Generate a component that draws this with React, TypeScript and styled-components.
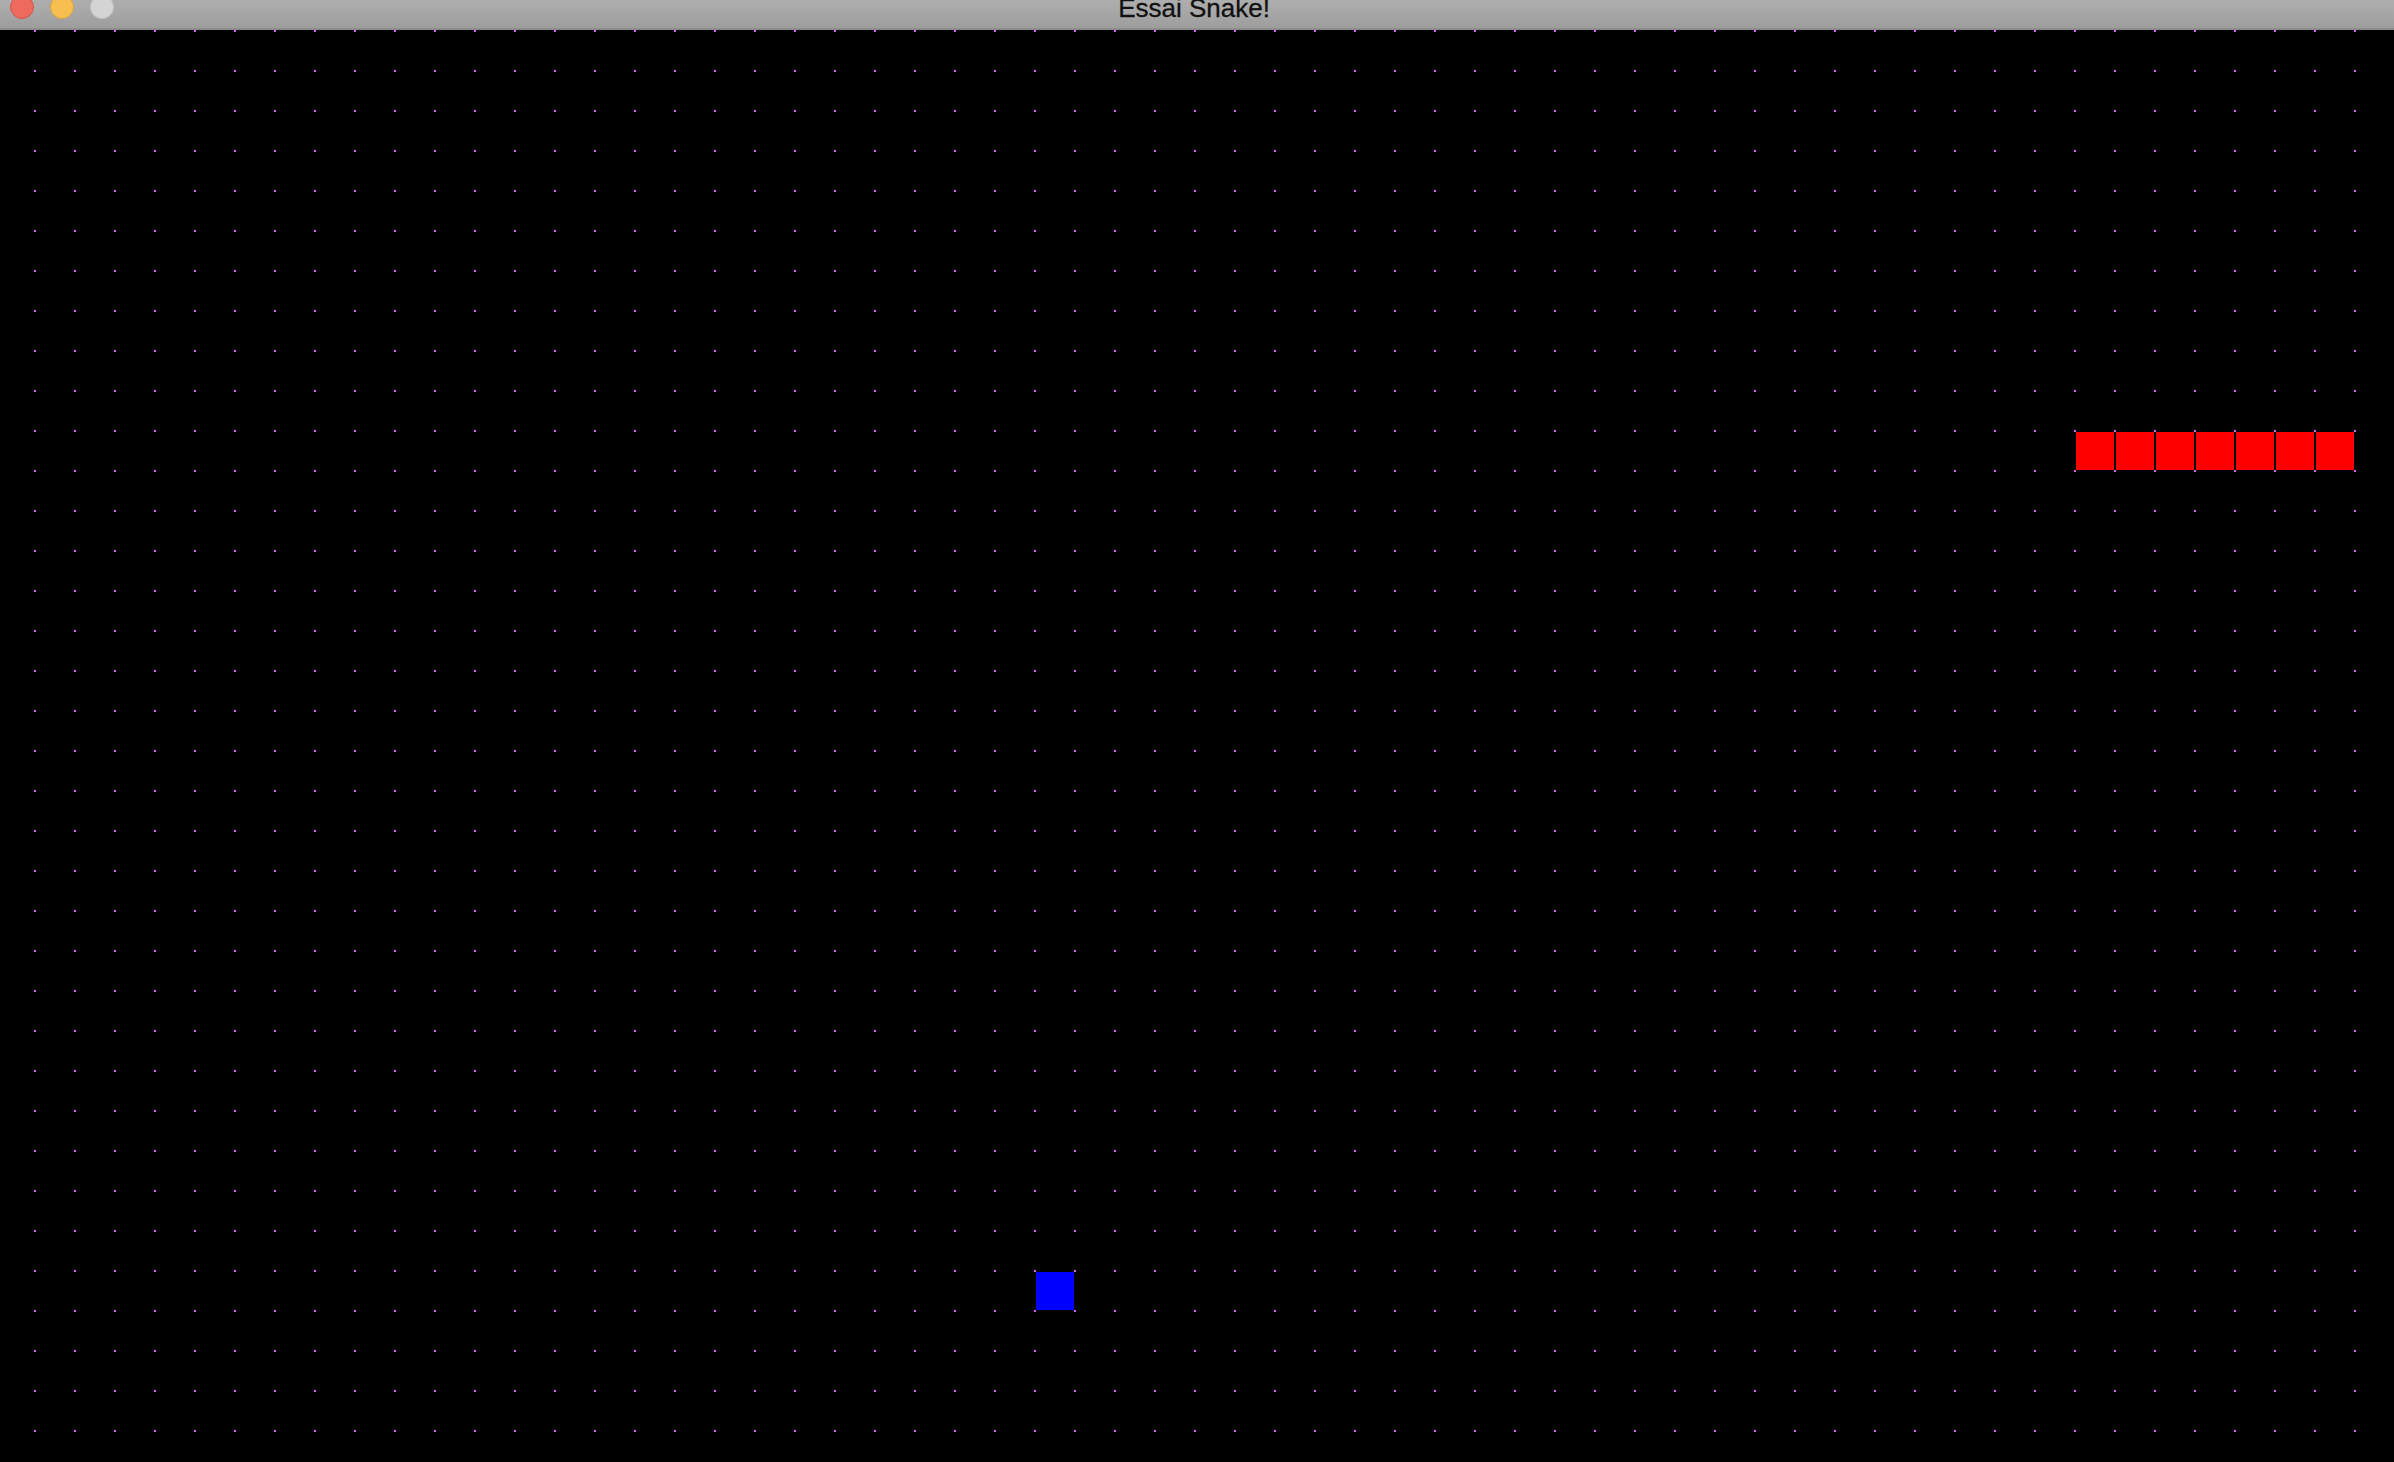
import React from "react";
import styled, { createGlobalStyle } from "styled-components";

const CELL = 40;
const ORIGIN_X = 34;
const DOT = "#d660f2";

const Global = createGlobalStyle`
  html, body { margin: 0; padding: 0; background: #000; overflow: hidden; }
  #root { width: 2394px; height: 1462px; }
`;

const Window = styled.div`
  width: 2394px;
  height: 1462px;
  display: flex;
  flex-direction: column;
  overflow: hidden;
  background: #000;
`;

const TitleBar = styled.div`
  flex: 0 0 44px;
  height: 44px;
  min-height: 0;
  overflow: hidden;
  margin-top: -14px;
  display: grid;
  grid-template-columns: 1fr auto 1fr;
  align-items: center;
  background: linear-gradient(#b4b4b4 0%, #a9a9a9 55%, #9d9d9d 100%);
  border-bottom: 2px solid #8c8c8c;
  box-sizing: border-box;
`;

const Lights = styled.div`
  display: flex;
  gap: 16px;
  padding-left: 10px;
`;

const Light = styled.span<{ $fill: string; $ring: string }>`
  width: 24px;
  height: 24px;
  border-radius: 50%;
  box-sizing: border-box;
  background: ${(p) => p.$fill};
  border: 1px solid ${(p) => p.$ring};
`;

const Title = styled.div`
  font-family: "Helvetica Neue", "Liberation Sans", Arial, sans-serif;
  font-size: 26px;
  color: #111;
  line-height: 40px;
  padding-top: 2px;
  margin-right: 6px;
  -webkit-text-stroke: 0.3px #111;
`;

const Board = styled.div`
  position: relative;
  flex: 1;
  background-color: #000;
  background-image: conic-gradient(from 270deg at 2px 2px, ${DOT} 25%, transparent 0);
  background-size: ${CELL}px ${CELL}px;
  background-position: ${ORIGIN_X}px 0;
`;

const Tile = styled.div<{ $col: number; $row: number; $color: string }>`
  position: absolute;
  left: ${(p) => ORIGIN_X + p.$col * CELL + 2}px;
  top: ${(p) => p.$row * CELL + 2}px;
  width: ${CELL - 2}px;
  height: ${CELL - 2}px;
  background: ${(p) => p.$color};
`;

const snake = [51, 52, 53, 54, 55, 56, 57].map((c) => ({ col: c, row: 10 }));
const food = { col: 25, row: 31 };

export default function App() {
  return (
    <>
      <Global />
      <Window>
        <TitleBar>
          <Lights>
            <Light $fill="#ee6a5f" $ring="#d5544a" />
            <Light $fill="#f6bf50" $ring="#dba33e" />
            <Light $fill="#d4d4d4" $ring="#c4c4c4" />
          </Lights>
          <Title>Essai Snake!</Title>
          <div />
        </TitleBar>
        <Board>
          {snake.map((s, i) => (
            <Tile key={i} $col={s.col} $row={s.row} $color="#ff0000" />
          ))}
          <Tile $col={food.col} $row={food.row} $color="#0000ff" />
        </Board>
      </Window>
    </>
  );
}
